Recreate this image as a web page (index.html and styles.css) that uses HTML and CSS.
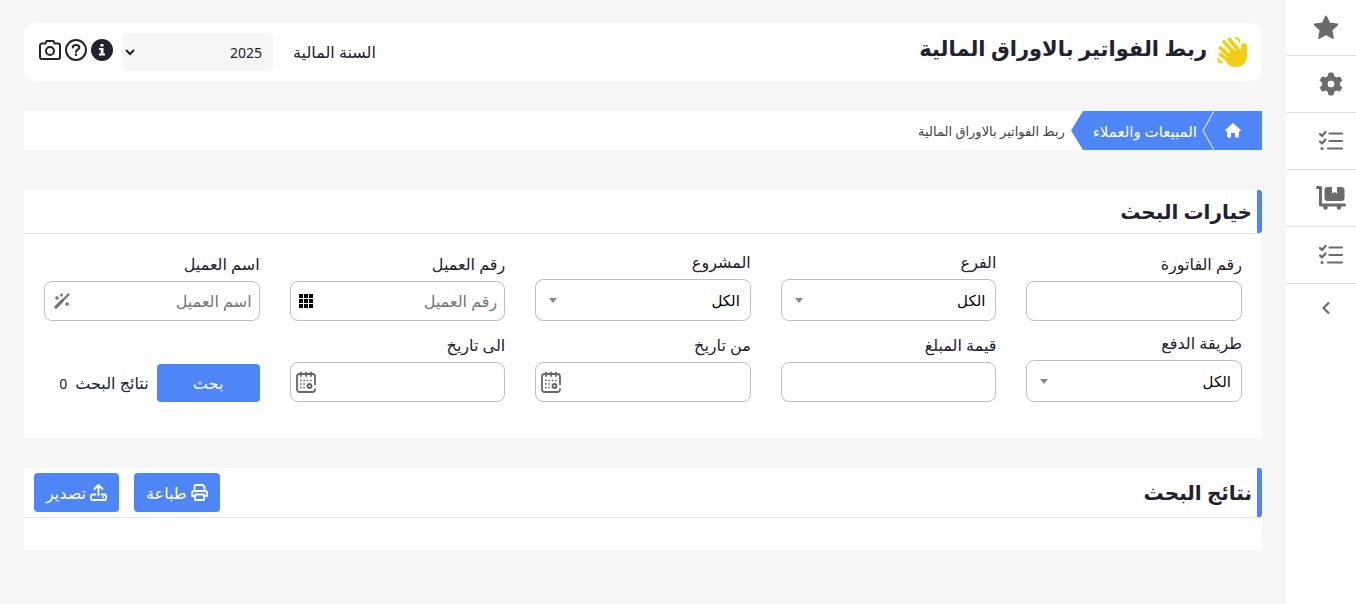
FILE: index.html
```html
<!DOCTYPE html>
<html lang="ar" dir="rtl">
<head>
  <meta charset="UTF-8" />
  <meta name="viewport" content="width=device-width, initial-scale=1.0"/>
  <title>ربط الفواتير بالاوراق المالية</title>
  <link rel="stylesheet" href="styles.css">
</head>
<body>
  <!-- shared icons -->
  <svg class="sprite" aria-hidden="true">
    <symbol id="i-list" viewBox="0 0 26 22">
      <path d="M2 4l2 2L7.500 2M2 11.500l2 2 3.500-4" fill="none" stroke="currentColor" stroke-width="2.200" stroke-linecap="round" stroke-linejoin="round"/>
      <path d="M11.500 3.500H24M11.500 11H24M10 18.500H24" fill="none" stroke="currentColor" stroke-width="2.200" stroke-linecap="round"/>
      <circle cx="4" cy="18.500" r="1.500" fill="currentColor"/>
    </symbol>
    <symbol id="i-calendar" viewBox="0 0 22 22">
      <path d="M20 14V5.500A2.500 2.500 0 0 0 17.500 3h-13A2.500 2.500 0 0 0 2 5.500v13A2.500 2.500 0 0 0 4.500 21h13a2.500 2.500 0 0 0 2.500-2.500v-1" fill="none" stroke="currentColor" stroke-width="1.800"/>
      <path d="M6 1.500V5M11 1.500V5M16 1.500V5" stroke="currentColor" stroke-width="1.800" stroke-linecap="round"/>
      <path d="M5 9.500h13M5 13h6M5 16.500h6" stroke="currentColor" stroke-width="1.600" stroke-dasharray="1.600 1.700"/>
      <circle cx="14.500" cy="15" r="1.900" fill="none" stroke="currentColor" stroke-width="2"/>
    </symbol>
    <symbol id="i-caret" viewBox="0 0 8 5"><path d="M0 0h8L4 5z" fill="currentColor"/></symbol>
  </svg>

  <div class="layout">
    <nav class="sidebar">
      <a href="#" class="side-link wide" aria-label="المفضلة">
        <svg width="26" height="26" viewBox="0 0 26 26"><path d="M13 1.500l3.300 7 8 1-5.800 5.500 1.400 8L13 19.300l-6.900 3.700 1.400-8L1.700 9.500l8-1z" fill="currentColor" stroke="currentColor" stroke-width="1.800" stroke-linejoin="round"/></svg>
      </a>
      <a href="#" class="side-link" aria-label="الاعدادات">
        <svg width="24" height="24" viewBox="0 0 24 24"><path d="M10 1h4l.9 3.500 2.400 1.400L20.800 5l2 3.500-2.500 2.600v2l2.500 2.500-2 3.500-3.500-1-2.400 1.400L14 23h-4l-.9-3.500-2.400-1.400-3.500 1-2-3.500L3.700 13v-2L1.200 8.500l2-3.500 3.500.9 2.400-1.400zM12 8a4 4 0 1 0 0 8 4 4 0 1 0 0-8z" fill="currentColor" fill-rule="evenodd" stroke="currentColor" stroke-width="1" stroke-linejoin="round"/></svg>
      </a>
      <a href="#" class="side-link" aria-label="المهام">
        <svg width="26" height="22"><use href="#i-list"/></svg>
      </a>
      <a href="#" class="side-link" aria-label="المخزون">
        <svg width="30" height="26" viewBox="0 0 30 26">
          <path d="M1.500 2.500h3V20H28.500" fill="none" stroke="currentColor" stroke-width="3" stroke-linecap="round" stroke-linejoin="round"/>
          <path d="M11.500 2H16v6.500L18.500 7 21 8.500V2h4.500a3 3 0 0 1 3 3v8a3 3 0 0 1-3 3h-14a3 3 0 0 1-3-3V5a3 3 0 0 1 3-3z" fill="currentColor"/>
          <circle cx="9.500" cy="22.500" r="2.200" fill="currentColor"/><circle cx="23" cy="22.500" r="2.200" fill="currentColor"/>
        </svg>
      </a>
      <a href="#" class="side-link" aria-label="التقارير">
        <svg width="26" height="22"><use href="#i-list"/></svg>
      </a>
      <button type="button" class="side-toggle" aria-label="القائمة">
        <svg width="8" height="14" viewBox="0 0 8 14"><path d="M7 1.500L1.500 7 7 12.500" fill="none" stroke="currentColor" stroke-width="2.200"/></svg>
      </button>
    </nav>

    <main class="content">
      <header class="topbar">
        <div class="title">
          <svg width="30" height="30" viewBox="0 0 30 30">
            <path d="M12.500 2.500L22 14M7 5L20 19M3.500 11L16 22M3.500 17.500L14 25" stroke="#f2ce14" stroke-width="3.800" stroke-linecap="round"/>
            <path d="M14 13l10 .5V9c0-2 1.500-3 3-3S30 7 30 8.500V19c0 6.500-5 11-11.500 11-4.500 0-7-2-9.500-5z" fill="#f2ce14"/>
            <path d="M18 0c3.500 0 5.500 2 5.500 5.500L22 6c-.5-2.500-1.500-3.500-4-4zM0 21c0 3.500 2 5.500 5.500 5.500l.5-2C3.500 24 2.500 23 2 21z" fill="#f2ce14"/>
          </svg>
          <h1>ربط الفواتير بالاوراق المالية</h1>
        </div>
        <div class="tools">
          <label for="year">السنة المالية</label>
          <div class="year-box">
            <select id="year" name="year"><option>2025</option></select>
            <svg width="10" height="7" viewBox="0 0 10 7"><path d="M1 1l4 4 4-4" fill="none" stroke="currentColor" stroke-width="2"/></svg>
          </div>
          <div class="tool-icons">
            <button type="button" aria-label="معلومات">
              <svg width="22" height="22" viewBox="0 0 22 22"><circle cx="11" cy="11" r="11" fill="currentColor"/><path d="M9.500 5h3v2.500h-3zM8 9h4.500v5.500H14v2H8v-2h1.700V11H8z" fill="#fff"/></svg>
            </button>
            <button type="button" aria-label="مساعدة">
              <svg width="22" height="22" viewBox="0 0 22 22"><circle cx="11" cy="11" r="10" fill="none" stroke="currentColor" stroke-width="2"/><path d="M7.800 8.500C7.800 6.800 9 6 11 6s3.400 1 3.400 2.600c0 2-3.400 2.200-3.400 4.400" fill="none" stroke="currentColor" stroke-width="2" stroke-linecap="round"/><circle cx="11" cy="15.800" r="1.300" fill="currentColor"/></svg>
            </button>
            <button type="button" aria-label="صورة">
              <svg width="22" height="22" viewBox="0 0 22 22"><path d="M3 4.500h3.500L7.500 2h7l1 2.500H19a2 2 0 0 1 2 2V18a2 2 0 0 1-2 2H3a2 2 0 0 1-2-2V6.500a2 2 0 0 1 2-2z" fill="none" stroke="currentColor" stroke-width="2" stroke-linejoin="round"/><circle cx="11" cy="12" r="4" fill="none" stroke="currentColor" stroke-width="2"/></svg>
            </button>
          </div>
        </div>
      </header>

      <nav class="breadcrumb">
        <a href="#" class="crumb home" aria-label="الرئيسية">
          <svg width="16" height="15" viewBox="0 0 16 15"><path d="M8 0l8 7.200-1 1.300h-1V13a1.500 1.500 0 0 1-1.500 1.500H10V10H6v4.500H3.500A1.500 1.500 0 0 1 2 13V8.500H1L0 7.200z" fill="currentColor"/></svg>
        </a>
        <svg class="arrow" width="12" height="39" viewBox="0 0 12 39"><path d="M0 0h12v39H0z" fill="#4e86f8"/><path d="M12 0L1 19.500 12 39" fill="none" stroke="#fff" stroke-width="1"/></svg>
        <a href="#" class="crumb">المبيعات والعملاء</a>
        <svg class="arrow" width="12" height="39" viewBox="0 0 12 39"><path d="M12 0L0 19.500 12 39z" fill="#4e86f8"/></svg>
        <span class="crumb current">ربط الفواتير بالاوراق المالية</span>
      </nav>

      <section class="panel">
        <div class="panel-head"><h2>خيارات البحث</h2></div>
        <form class="filters">
          <div class="field">
            <label for="invoice">رقم الفاتورة</label>
            <div class="control"><input type="text" id="invoice" name="invoice"></div>
          </div>
          <div class="field">
            <label for="branch">الفرع</label>
            <div class="control">
              <select id="branch" name="branch"><option>الكل</option></select>
              <svg class="caret" width="8" height="5"><use href="#i-caret"/></svg>
            </div>
          </div>
          <div class="field">
            <label for="project">المشروع</label>
            <div class="control">
              <select id="project" name="project"><option>الكل</option></select>
              <svg class="caret" width="8" height="5"><use href="#i-caret"/></svg>
            </div>
          </div>
          <div class="field">
            <label for="clientNo">رقم العميل</label>
            <div class="control">
              <input type="text" id="clientNo" name="clientNo" placeholder="رقم العميل">
              <svg class="icon dark" width="14" height="14" viewBox="0 0 14 14"><path d="M0 0h4v4H0zM5 0h4v4H5zM10 0h4v4h-4zM0 5h4v4H0zM5 5h4v4H5zM10 5h4v4h-4zM0 10h4v4H0zM5 10h4v4H5zM10 10h4v4h-4z" fill="currentColor"/></svg>
            </div>
          </div>
          <div class="field">
            <label for="clientName">اسم العميل</label>
            <div class="control">
              <input type="text" id="clientName" name="clientName" placeholder="اسم العميل">
              <svg class="icon wand" width="16" height="16" viewBox="0 0 16 16"><path d="M2 14L8 8" stroke="currentColor" stroke-width="3.200" stroke-linecap="round"/><path d="M7 9l7.500-7.500" stroke="currentColor" stroke-width="2.400" stroke-linecap="round"/><path d="M3 3v4M1 5h4M7.500 .5v3M6 2h3M13 9v4M11 11h4" stroke="currentColor" stroke-width="1.400"/></svg>
            </div>
          </div>
          <div class="field">
            <label for="payment">طريقة الدفع</label>
            <div class="control">
              <select id="payment" name="payment"><option>الكل</option></select>
              <svg class="caret" width="8" height="5"><use href="#i-caret"/></svg>
            </div>
          </div>
          <div class="field">
            <label for="amount">قيمة المبلغ</label>
            <div class="control"><input type="text" id="amount" name="amount"></div>
          </div>
          <div class="field">
            <label for="fromDate">من تاريخ</label>
            <div class="control">
              <input type="text" id="fromDate" name="fromDate">
              <svg class="icon date" width="22" height="22"><use href="#i-calendar"/></svg>
            </div>
          </div>
          <div class="field">
            <label for="toDate">الى تاريخ</label>
            <div class="control">
              <input type="text" id="toDate" name="toDate">
              <svg class="icon date" width="22" height="22"><use href="#i-calendar"/></svg>
            </div>
          </div>
          <div class="search-row">
            <button type="button" class="btn search">بحث</button>
            <span>نتائج البحث</span>
            <span class="count">0</span>
          </div>
        </form>
      </section>

      <section class="panel">
        <div class="panel-head results-head">
          <h2>نتائج البحث</h2>
          <div class="actions">
            <button type="button" class="btn">
              <svg width="17" height="17" viewBox="0 0 17 17"><path d="M3.500 6.500V2.500A1.500 1.500 0 0 1 5 1h6.500l2 2v3.500M3.500 12H1V9a2 2 0 0 1 2-2h11a2 2 0 0 1 2 2v3h-2.500M4 10.500h9V16H4z" fill="none" stroke="currentColor" stroke-width="1.800" stroke-linejoin="round"/></svg>
              طباعة
            </button>
            <button type="button" class="btn">
              <svg width="17" height="17" viewBox="0 0 17 17"><path d="M8.500 11.500V1.500M4.500 5l4-4 4 4M5.500 10.500H2.500A1.500 1.500 0 0 0 1 12v2.500A1.500 1.500 0 0 0 2.500 16h12a1.500 1.500 0 0 0 1.500-1.500V12a1.500 1.500 0 0 0-1.500-1.500h-3" fill="none" stroke="currentColor" stroke-width="1.800" stroke-linecap="round" stroke-linejoin="round"/><circle cx="13" cy="13.200" r="1" fill="currentColor"/></svg>
              تصدير
            </button>
          </div>
        </div>
        <div class="results"></div>
      </section>
    </main>
  </div>
</body>
</html>
```
FILE: styles.css
```css
* {
  margin: 0;
  padding: 0;
  box-sizing: border-box;
}

body {
  font-family: 'Noto Sans', 'DejaVu Sans', sans-serif;
  font-size: 16px;
  background: #f6f6f6;
  color: #212130;
}

button, input, select {
  font-family: inherit;
  font-size: inherit;
  color: inherit;
}

button {
  border: none;
  background: none;
  cursor: pointer;
}

a {
  text-decoration: none;
}

svg {
  display: block;
  flex-shrink: 0;
}

.sprite {
  display: none;
}

.layout {
  display: flex;
  min-height: 100vh;
}

/* sidebar */
.sidebar {
  width: 70px;
  flex-shrink: 0;
  background: #fff;
  color: #6b6b6b;
}

.side-link {
  display: flex;
  align-items: center;
  justify-content: center;
  height: 57px;
  padding-left: 20px;
  border-bottom: 1px solid #dee2e6;
  color: inherit;
}

.side-link.wide {
  height: 56px;
  padding-left: 10px;
}

.side-toggle {
  display: flex;
  align-items: center;
  justify-content: center;
  width: 100%;
  height: 48px;
  padding-left: 10px;
  color: inherit;
}

.content {
  flex: 1;
  min-width: 0;
  padding: 23px 24px;
}

/* top bar */
.topbar {
  display: flex;
  justify-content: space-between;
  align-items: center;
  min-height: 58px;
  padding: 0 15px;
  margin-bottom: 30px;
  background: #fff;
  border-radius: 12px;
}

.title {
  display: flex;
  align-items: center;
  gap: 10px;
}

h1 {
  padding-bottom: 8px;
  font-size: 21px;
  line-height: 30px;
}

.tools {
  display: flex;
  align-items: center;
}

.tools label {
  line-height: 24px;
}

.year-box {
  position: relative;
  width: 150px;
  margin: 0 20px 0 10px;
}

.year-box select {
  width: 100%;
  height: 38px;
  padding: 0 11px;
  border: none;
  border-radius: 5px;
  background: #f6f6f6;
  font-size: 14px;
  appearance: none;
}

.year-box svg {
  position: absolute;
  left: 2px;
  top: 16px;
  pointer-events: none;
}

.tool-icons {
  display: flex;
  gap: 4px;
  padding-bottom: 4px;
}

/* breadcrumb */
.breadcrumb {
  display: flex;
  height: 39px;
  margin-bottom: 40px;
  background: #fff;
  font-size: 15px;
}

.crumb {
  display: flex;
  align-items: center;
  padding: 0 5px 0 10px;
  background: #4e86f8;
  color: #fff;
}

.crumb.home {
  width: 48px;
  justify-content: center;
  padding: 0 10px 0 0;
}

.crumb.current {
  padding: 0 6px;
  background: none;
  color: #444;
  font-size: 13px;
}

/* panels */
.panel {
  margin-bottom: 30px;
  background: #fff;
}

.panel-head {
  display: flex;
  align-items: stretch;
  justify-content: space-between;
  border-bottom: 1px solid #e3e4e6;
}

h2 {
  display: flex;
  align-items: center;
  min-height: 43px;
  padding-right: 5px;
  border-right: 5px solid #4e86f8;
  border-radius: 3px;
  font-size: 20px;
}

.filters {
  display: grid;
  grid-template-columns: repeat(5, 1fr);
  gap: 10px 30px;
  align-items: end;
  padding: 16px 20px 36px;
}

.field label {
  display: block;
  height: 24px;
  margin-bottom: 5px;
  line-height: 24px;
}

.control {
  position: relative;
}

.control input, .control select {
  display: block;
  width: 100%;
  height: 40px;
  padding: 0 7px;
  border: 1px solid #bfbfbf;
  border-radius: 8px;
  background: #fff;
}

.control select {
  height: 42px;
  padding: 0 10px;
  color: #000;
  font-size: 15px;
  appearance: none;
}

.control input::placeholder {
  color: #777;
}

.caret, .icon {
  position: absolute;
  top: 0;
  bottom: 0;
  margin: auto 0;
  pointer-events: none;
}

.caret {
  left: 14px;
  color: #888;
}

.icon {
  left: 9px;
}

.icon.dark {
  color: #000;
}

.icon.wand {
  left: 10px;
  color: #777;
}

.icon.date {
  left: 5px;
  color: #666;
}

.btn {
  display: flex;
  align-items: center;
  justify-content: center;
  gap: 4px;
  height: 39px;
  padding: 0 12px;
  border-radius: 4px;
  background: #4e86f8;
  color: #fff;
}

.search-row {
  display: flex;
  align-items: center;
  gap: 8px;
}

.count {
  font-size: 14px;
}

.btn.search {
  width: 103px;
  height: 38px;
}

.results-head {
  padding-left: 10px;
}

.actions {
  display: flex;
  gap: 15px;
  padding: 5px 0;
}

.results {
  min-height: 32px;
}
```
